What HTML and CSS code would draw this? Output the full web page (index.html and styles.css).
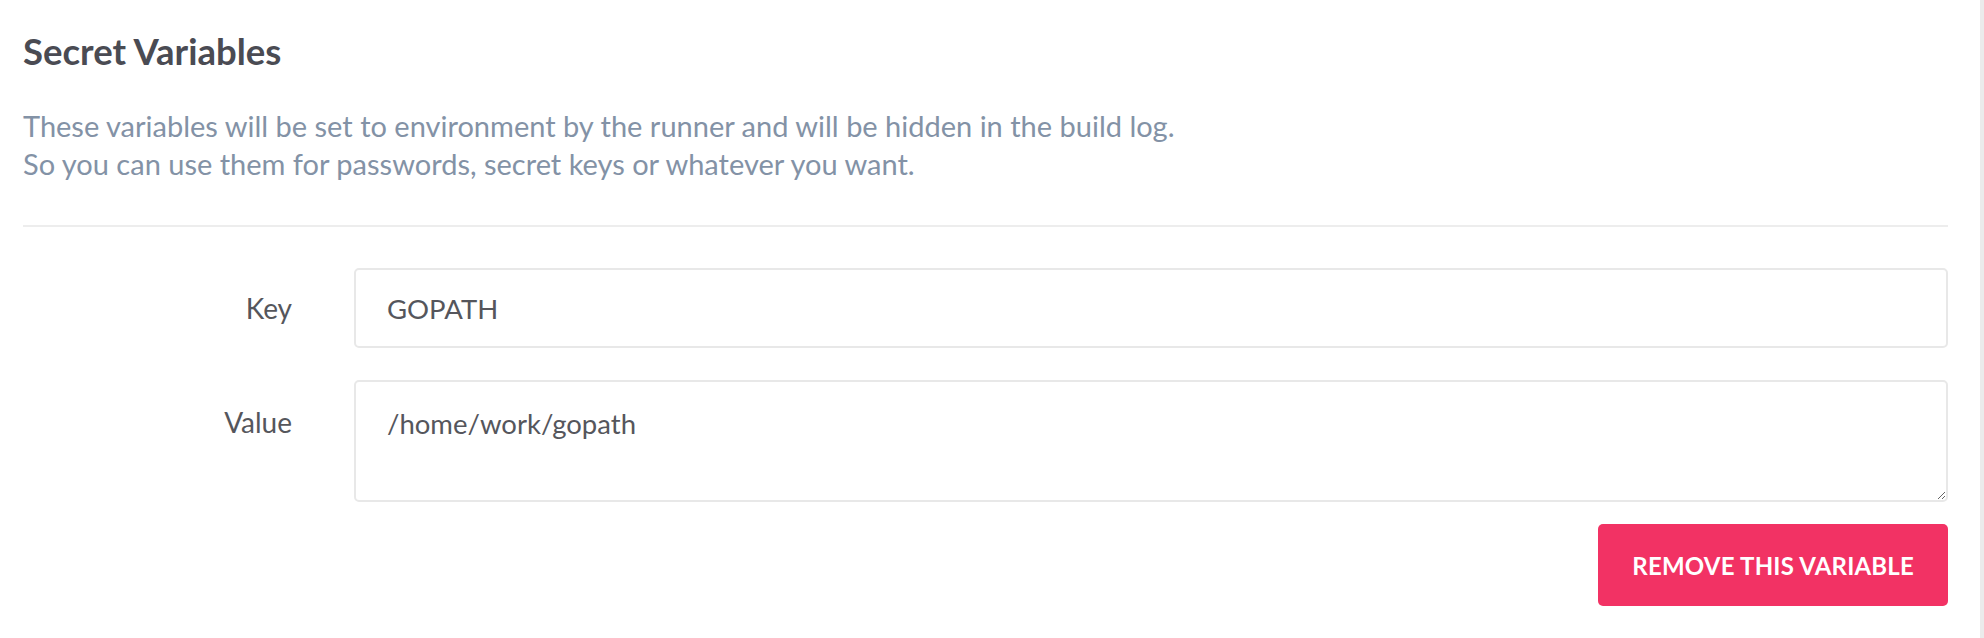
FILE: index.html
```html
<!DOCTYPE html>
<html>
<head>
<meta charset="utf-8">
<link rel="stylesheet" href="styles.css">
</head>
<body>
<div class="page">
  <section class="panel">
    <h2 class="title">Secret Variables</h2>
    <p class="desc">These variables will be set to environment by the runner and will be hidden in the build log.<br>So you can use them for passwords, secret keys or whatever you want.</p>
    <hr class="divider">
    <form class="form">
      <label class="label" for="key">Key</label>
      <input class="field" id="key" type="text" value="GOPATH">
      <label class="label label-top" for="value">Value</label>
      <textarea class="field area" id="value">/home/work/gopath</textarea>
      <div class="actions">
        <button type="button" class="btn-danger">Remove this variable</button>
      </div>
    </form>
  </section>
</div>
</body>
</html>
```

FILE: styles.css
```css
html, body {
  margin: 0;
  padding: 0;
  background: #fff;
}
body {
  font-family: "Lato", "Liberation Sans", sans-serif;
  height: 638px;
  overflow: hidden;
}
.page {
  height: 638px;
  border-right: 4px solid #ebebeb;
  box-sizing: border-box;
  padding: 0 32px 0 23px;
}
.panel {
  padding-top: 29px;
}
.title {
  margin: 0;
  font-size: 36.5px;
  font-weight: 700;
  color: #4a4b53;
  line-height: 44px;
}
.desc {
  margin: 34px 0 0;
  font-size: 29px;
  line-height: 38px;
  color: #8392a6;
}
.divider {
  border: 0;
  border-top: 2px solid #ededed;
  margin: 42px 0 0;
}
.form {
  display: grid;
  grid-template-columns: 269px 1fr;
  column-gap: 62px;
  row-gap: 32px;
  margin-top: 41px;
  align-items: center;
}
.label {
  text-align: right;
  font-size: 28px;
  color: #55565c;
}
.label-top {
  align-self: start;
  padding-top: 25px;
}
.field {
  box-sizing: border-box;
  width: 100%;
  height: 80px;
  border: 2px solid #e8e8e8;
  border-radius: 5px;
  padding: 0 31px;
  font-family: inherit;
  font-size: 27.5px;
  color: #55565c;
  background: #fff;
  outline: none;
}
.area {
  height: 122px;
  padding-top: 24px;
  line-height: 36px;
  resize: vertical;
  display: block;
}
.actions {
  grid-column: 2;
  display: flex;
  justify-content: flex-end;
  margin-top: -10px;
}
.btn-danger {
  height: 82px;
  padding: 0 34px;
  border: 0;
  border-radius: 5px;
  background: #f23264;
  color: #fff;
  font-family: inherit;
  font-size: 24px;
  font-weight: 700;
  text-transform: uppercase;
  letter-spacing: 0.2px;
}
```
